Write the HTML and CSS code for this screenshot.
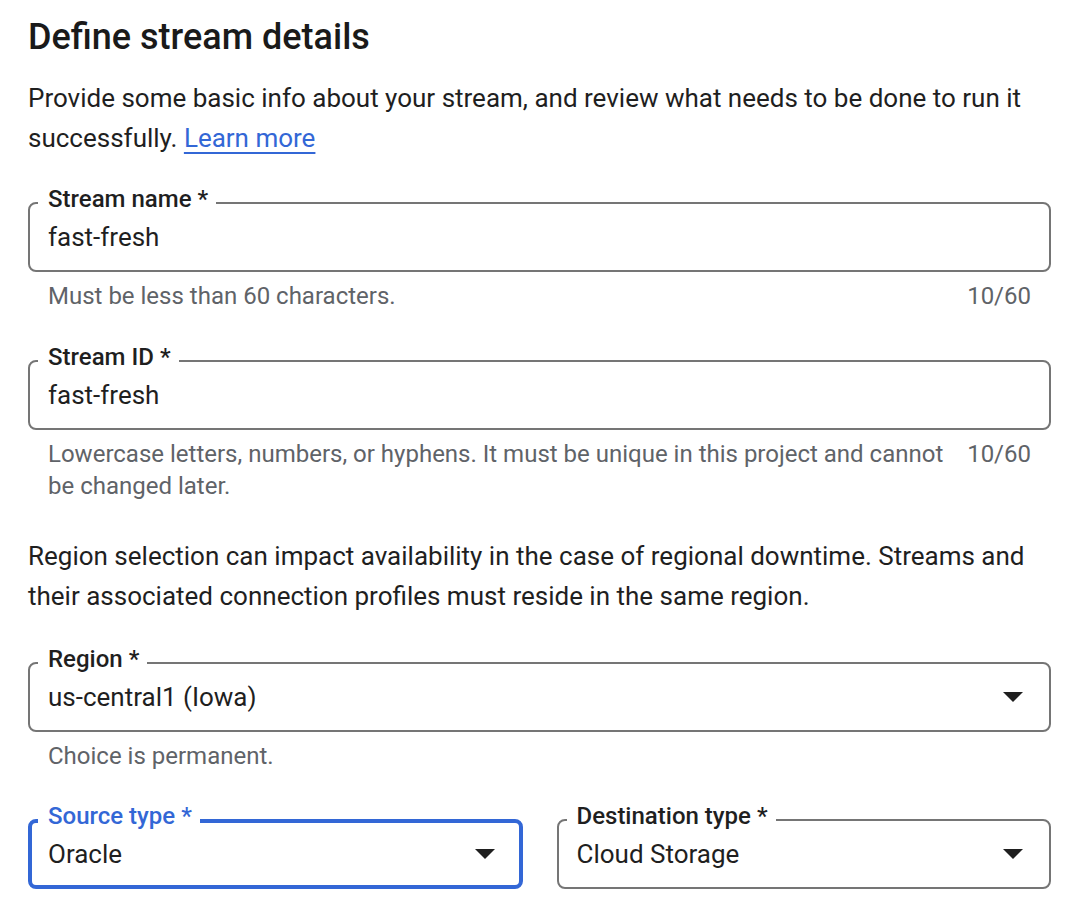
FILE: index.html
```html
<!DOCTYPE html>
<html lang="en">
<head>
<meta charset="utf-8">
<title>Define stream details</title>
<link rel="stylesheet" href="styles.css">
</head>
<body>
<main class="page">
  <h1 class="title">Define stream details</h1>
  <p class="intro">Provide some basic info about your stream, and review what needs to be done to run it successfully. <a class="link" href="#">Learn more</a></p>

  <div class="group group-name">
    <div class="field">
      <span class="field-label">Stream name *</span>
      <span class="field-value">fast-fresh</span>
    </div>
    <div class="hint"><span class="hint-text">Must be less than 60 characters.</span><span class="hint-count">10/60</span></div>
  </div>

  <div class="group group-id">
    <div class="field">
      <span class="field-label">Stream ID *</span>
      <span class="field-value">fast-fresh</span>
    </div>
    <div class="hint"><span class="hint-text">Lowercase letters, numbers, or hyphens. It must be unique in this project and cannot be changed later.</span><span class="hint-count">10/60</span></div>
  </div>

  <p class="intro intro-region">Region selection can impact availability in the case of regional downtime. Streams and their associated connection profiles must reside in the same region.</p>

  <div class="group group-region">
    <div class="field field-select">
      <span class="field-label">Region *</span>
      <span class="field-value">us-central1 (Iowa)</span>
      <svg class="arrow" width="20" height="10" viewBox="0 0 20 10" aria-hidden="true"><path d="M0 0H20L10 10Z"/></svg>
    </div>
    <div class="hint"><span class="hint-text">Choice is permanent.</span></div>
  </div>

  <div class="row">
    <div class="field field-select field-focused">
      <span class="field-label">Source type *</span>
      <span class="field-value">Oracle</span>
      <svg class="arrow" width="20" height="10" viewBox="0 0 20 10" aria-hidden="true"><path d="M0 0H20L10 10Z"/></svg>
    </div>
    <div class="field field-select">
      <span class="field-label">Destination type *</span>
      <span class="field-value">Cloud Storage</span>
      <svg class="arrow" width="20" height="10" viewBox="0 0 20 10" aria-hidden="true"><path d="M0 0H20L10 10Z"/></svg>
    </div>
  </div>
</main>
</body>
</html>
```

FILE: styles.css
```css
* {
  box-sizing: border-box;
}

html, body {
  margin: 0;
  background: #ffffff;
}

body {
  font-family: Roboto, "Liberation Sans", Arial, sans-serif;
  color: #1f1f1f;
}

.page {
  padding: 0 15px 0 28px;
}

.title {
  margin: 17px 0 0;
  font-size: 36px;
  line-height: 40px;
  font-weight: 500;
  color: #1a1a1a;
}

.intro {
  margin: 21px 0 0;
  font-size: 26px;
  line-height: 40px;
  font-weight: 400;
}

.intro-region {
  margin-top: 34px;
}

.link {
  color: #3367d6;
  text-decoration: underline;
  text-decoration-thickness: 2px;
  text-underline-offset: 5px;
}

.group-name {
  margin-top: 44px;
}

.group-id {
  margin-top: 48px;
}

.group-region {
  margin-top: 46px;
}

.field {
  position: relative;
  display: flex;
  align-items: center;
  height: 70px;
  padding: 17px 20px 17px 18px;
  border: 2px solid #757575;
  border-radius: 8px;
  background: #ffffff;
}

.field-label {
  position: absolute;
  top: -19px;
  left: 8px;
  padding: 0 8px 0 10px;
  background: #ffffff;
  font-size: 24px;
  line-height: 28px;
  font-weight: 500;
  color: #1f1f1f;
  white-space: nowrap;
}

.field-value {
  flex: 1;
  font-size: 26px;
  line-height: 32px;
  color: #1f1f1f;
  white-space: nowrap;
}

.arrow {
  flex: none;
  margin-right: 6px;
  fill: #1f1f1f;
}

.field-focused {
  border: 4px solid #3367d6;
  padding: 15px 18px 15px 16px;
}

.field-focused .field-label {
  top: -21px;
  left: 6px;
  color: #3367d6;
}

.hint {
  display: flex;
  justify-content: space-between;
  gap: 16px;
  margin-top: 8px;
  padding: 0 20px;
  font-size: 24px;
  line-height: 32px;
  color: #5f6368;
}

.hint-count {
  flex: none;
}

.row {
  display: grid;
  grid-template-columns: 1fr 1fr;
  gap: 34px;
  margin-top: 47px;
}
```
